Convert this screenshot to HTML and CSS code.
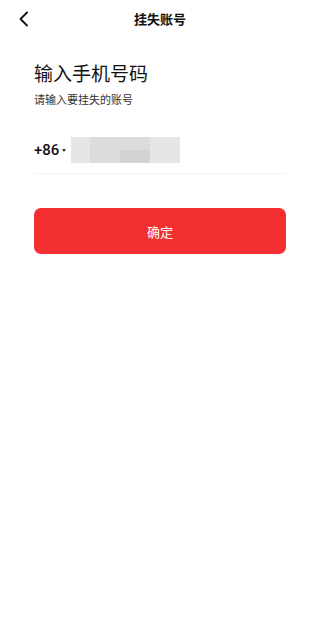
FILE: index.html
```html
<!DOCTYPE html>
<html lang="zh-CN">
<head>
<meta charset="utf-8">
<meta name="viewport" content="width=device-width, initial-scale=1">
<title>挂失账号</title>
<link rel="stylesheet" href="styles.css">
</head>
<body>
<div class="page">
  <header class="nav">
    <span class="back">
      <svg width="12" height="16" viewBox="0 0 12 16"><path d="M9 1.5 L2.5 8 L9 14.5" fill="none" stroke="#111" stroke-width="1.8" stroke-linecap="round" stroke-linejoin="round"/></svg>
    </span>
    <h1 class="nav-title">挂失账号</h1>
  </header>
  <main class="content">
    <h2 class="heading">输入手机号码</h2>
    <p class="sub">请输入要挂失的账号</p>
    <div class="phone-row">
      <span class="code">+86</span>
      <span class="caret"></span>
      <span class="blur">
        <span class="blur-a"></span>
        <span class="blur-b"><span class="blur-b1"></span><span class="blur-b2"></span></span>
        <span class="blur-c"></span>
      </span>
    </div>
    <button class="confirm">确定</button>
  </main>
</div>
</body>
</html>
```
FILE: styles.css
```css
* { box-sizing: border-box; }
html, body { margin: 0; padding: 0; background: #fff; }
body {
  font-family: "Noto Sans CJK SC", "Noto Sans", sans-serif;
  color: #111;
  width: 320px;
  height: 630px;
}
.nav {
  position: relative;
  height: 38px;
  display: flex;
  align-items: center;
  justify-content: center;
}
.back {
  position: absolute;
  left: 18px;
  top: 11px;
  width: 12px;
  height: 16px;
  display: flex;
}
.nav-title {
  margin: 0;
  font-size: 13px;
  font-weight: 700;
  line-height: 18px;
  color: #111;
}
.content {
  padding: 0 34px;
}
.heading {
  margin: 23px 0 0;
  font-size: 19px;
  font-weight: 400;
  line-height: 24px;
  color: #111;
}
.sub {
  margin: 6px 0 0;
  font-size: 11px;
  line-height: 16px;
  color: #333;
}
.phone-row {
  margin-top: 30px;
  height: 37px;
  display: flex;
  align-items: flex-start;
  border-bottom: 1px solid #f4f4f4;
}
.code {
  font-family: "Roboto", "Noto Sans", sans-serif;
  font-size: 15px;
  font-weight: 500;
  line-height: 26px;
  color: #111;
}
.caret {
  margin: 12px 0 0 3px;
  width: 0;
  height: 0;
  border-left: 2px solid transparent;
  border-right: 2px solid transparent;
  border-top: 3px solid #333;
}
.blur {
  margin-left: 5px;
  display: flex;
  height: 26px;
}
.blur-a { width: 19px; background: #e6e6e6; }
.blur-b { width: 60px; display: flex; background: #dcdcdc; }
.blur-b1 { width: 30px; }
.blur-b2 { width: 30px; margin-top: 13px; background: #d3d3d3; }
.blur-c { width: 30px; background: #e6e6e6; }
.confirm {
  margin-top: 34px;
  width: 100%;
  height: 46px;
  border: 0;
  border-radius: 7px;
  background: #f42f31;
  color: #fff;
  font-family: "Noto Sans CJK SC", sans-serif;
  font-size: 13px;
  display: block;
  padding: 0;
}
```
